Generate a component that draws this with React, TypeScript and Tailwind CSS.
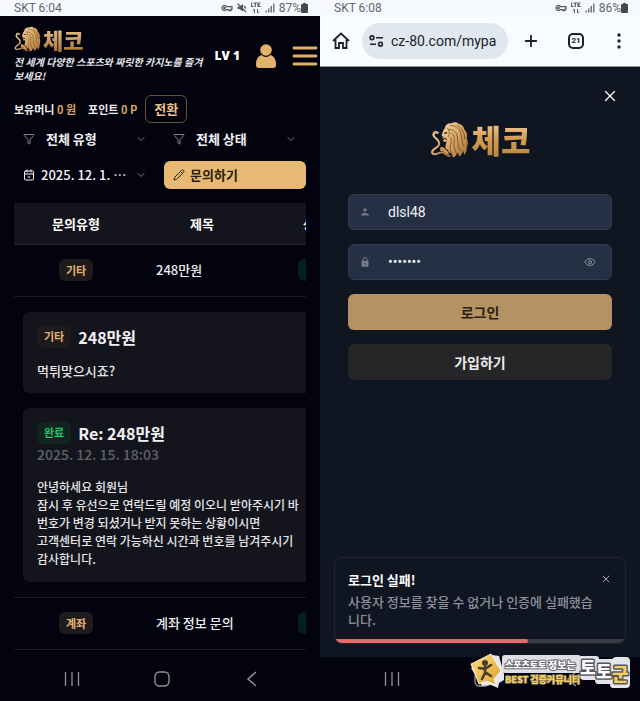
import { ReactNode } from 'react';
import { CalendarMinus2, ChevronDown, Eye, Filter, Pencil, Plus, X } from 'lucide-react';

type InquiryRow = {
  id: number;
  type: string;
  title: string;
};

const LION_LINES = [
  'M70 22 C84 20 98 30 102 44 C106 58 104 70 110 82',
  'M66 34 C80 32 90 42 92 56 C94 70 92 84 100 98',
  'M74 44 C82 50 84 60 82 72 C80 86 84 98 90 108',
  'M72 58 C76 68 72 78 70 88 C70 98 74 104 76 112',
  'M92 20 C106 30 114 44 114 62',
];

function Lion({ id, className }: { id: string; className: string }) {
  return (
    <svg className={className} viewBox="10 8 116 112" fill="none" aria-hidden="true">
      <defs>
        <linearGradient id={id} x1="0" y1="0" x2="1" y2="1">
          <stop offset="0" stopColor="#f6e0b0" />
          <stop offset="0.45" stopColor="#dca866" />
          <stop offset="1" stopColor="#a06c34" />
        </linearGradient>
      </defs>
      {/* tail and front leg */}
      <path
        d="M32 44 C22 38 16 48 22 56 C30 64 40 68 36 80 C33 90 14 92 15 104 C20 116 34 104 44 103 C54 102 56 112 68 114"
        stroke={`url(#${id})`}
        strokeWidth="6"
        strokeLinecap="round"
      />
      <path d="M20 46 C18 36 30 34 36 44 C30 42 26 44 24 48 Z" fill="#dca866" />
      <path d="M40 88 C48 84 52 90 58 96 C64 100 66 106 66 110 C56 108 52 98 40 98 Z" fill="#cf9752" />
      {/* head and mane */}
      <path
        fill={`url(#${id})`}
        d="M46 46 C48 40 50 34 54 30 C54 22 62 14 74 15 C82 9 92 12 96 16 C106 18 112 26 113 34 C121 42 123 52 120 60 C126 72 122 82 120 90 C121 98 118 106 112 110 C112 104 110 100 108 98 C108 106 102 114 96 116 C97 110 95 106 92 104 C90 112 84 118 77 118 C78 112 74 108 72 104 C68 106 64 102 64 96 C58 96 54 90 56 84 C56 78 60 74 58 70 C54 72 50 70 48 67 L53 63 L46 61 L48 55 L44 51 Z"
      />
      <path d="M50 44 L58 41 L62 44 L56 47 Z" fill="#20140a" />
      <path d="M47 60 L56 60 L60 66" stroke="#2c1a0b" strokeWidth="3" />
      <path d="M60 28 C68 34 70 44 64 56" stroke="#5a3818" strokeWidth="2" />
      {LION_LINES.map((d) => (
        <path key={d} d={d} stroke="#5b3a1c" strokeWidth="2" strokeLinecap="round" />
      ))}
    </svg>
  );
}

function SignalIcons({ muted }: { muted?: boolean }) {
  return (
    <span className="flex items-center gap-1 text-[#53575e]">
      <svg className="h-2 w-3" viewBox="0 0 24 14" fill="none" stroke="currentColor" strokeWidth="2.5" aria-hidden="true">
        <path d="M11 4a5 5 0 1 0 0 6h5v2h4v-3h2V4H11z" />
        <circle cx="7" cy="7" r="1.5" />
      </svg>
      {muted && (
        <svg className="h-2.5 w-2.5" viewBox="0 0 20 20" fill="currentColor" aria-hidden="true">
          <path d="M1 7h4l7-5v15l-7-5H1z" />
          <path d="M1 1l17 17M14 6l4 5" stroke="currentColor" strokeWidth="2.5" />
        </svg>
      )}
      <svg className="h-3 w-2.5" viewBox="0 0 20 24" fill="none" stroke="currentColor" strokeWidth="2.4" aria-hidden="true">
        <path d="M1 1v8h4M5 2h7M8.500 2v8M19 2h-5v7h5M14 5.500h4" />
        <path d="M7 22v-8l-3 3M13 14v8l3-3" strokeWidth="2" />
      </svg>
      <svg className="h-2.5 w-2.5" viewBox="0 0 20 20" fill="currentColor" aria-hidden="true">
        <path d="M1 15h3v4H1zM6 11h3v8H6zM11 6h3v13h-3zM16 1h3v18h-3z" opacity="0.8" />
      </svg>
    </span>
  );
}

function StatusBar({ time, battery, muted }: { time: string; battery: string; muted?: boolean }) {
  return (
    <div className="flex h-4 items-center justify-between bg-[#f6f9fe] pr-3 pl-[14px] font-[Roboto,sans-serif] text-xs text-[#63676e]">
      <span>SKT {time}</span>
      <span className="flex items-center gap-1">
        <SignalIcons muted={muted} />
        <span className="flex items-center">
          {battery}
          <svg className="h-[10px] w-[7px]" viewBox="0 0 14 20" fill="#46494f" aria-hidden="true">
            <path d="M4 0h6v2h2q2 0 2 2v14q0 2-2 2H2q-2 0-2-2V4q0-2 2-2h2z" />
          </svg>
        </span>
      </span>
    </div>
  );
}

function RecentsIcon() {
  return (
    <svg className="h-4 w-4" viewBox="0 0 16 16" stroke="#8f9196" strokeWidth="1.300" aria-hidden="true">
      <path d="M1.500 1v14M8 1v14M14.500 1v14" />
    </svg>
  );
}

function PhoneNav() {
  return (
    <nav className="flex h-11 items-center justify-between bg-[#03030f] pr-[60px] pl-16">
      <button aria-label="최근 앱"><RecentsIcon /></button>
      <button aria-label="홈">
        <svg className="h-4 w-4" viewBox="0 0 16 16" fill="none" stroke="#8f9196" strokeWidth="1.400" aria-hidden="true">
          <rect x="1" y="1" width="14" height="14" rx="4.500" />
        </svg>
      </button>
      <button aria-label="뒤로">
        <svg className="h-4 w-4" viewBox="0 0 16 16" fill="none" stroke="#8f9196" strokeWidth="1.500" aria-hidden="true">
          <path d="M12 1L4 8l8 7" />
        </svg>
      </button>
    </nav>
  );
}

function Badge({ tone, children }: { tone: 'gold' | 'green'; children: ReactNode }) {
  const colors = tone === 'gold' ? 'bg-[#1f1a1b] text-[#e3b273]' : 'bg-[#10251f] text-[#1fc768]';
  return (
    <span className={`inline-flex h-[22px] items-center rounded-md px-[7px] text-[11px] font-bold ${colors}`}>
      {children}
    </span>
  );
}

function FilterButton({ icon, label, date }: { icon: ReactNode; label: string; date?: boolean }) {
  return (
    <button className="flex h-7 items-center px-[9px] text-[13px] font-bold text-[#f2f2f4]">
      {icon}
      <span className={`flex-1 text-left whitespace-nowrap ${date ? 'pl-[6px] font-medium' : 'pl-[11px]'}`}>
        {label}
      </span>
      <ChevronDown className="size-3 shrink-0 text-[#77777f]" strokeWidth={2} />
    </button>
  );
}

function ListRow({ row }: { row: InquiryRow }) {
  return (
    <tr className="h-[52px] border-b border-[#1b1b23]">
      <td className="text-center"><Badge tone="gold">{row.type}</Badge></td>
      <td className="pl-[18px] font-medium text-[#ececef]">{row.title}</td>
      <td className="text-center">
        <span className="inline-block h-[22px] w-[34px] rounded-md bg-[#04201e] align-middle" />
      </td>
    </tr>
  );
}

function InquiryScreen() {
  return (
    <section className="flex flex-col overflow-hidden bg-[#03030f]">
      <StatusBar time="6:04" battery="87%" muted />
      <header className="flex items-center justify-between pt-[9px] pr-[2px] pl-[14px]">
        <div>
          <a href="#home" className="flex items-center gap-[2px]">
            <Lion id="lion-small" className="h-[26px] w-[27px]" />
            <span className="bg-linear-to-b from-[#efcf95] to-[#a8702f] bg-clip-text text-[22px] leading-7 font-black text-transparent">체코</span>
          </a>
          <p className="w-[190px] pt-[2px] text-[10px] leading-[14px] font-bold text-[#e4e4e8] italic">
            전 세계 다양한 스포츠와 짜릿한 카지노를 즐겨 보세요!
          </p>
        </div>
        <div className="flex items-center pt-1">
          <span className="font-['Open_Sans',sans-serif] text-xs font-extrabold text-white">LV 1</span>
          <button aria-label="내 정보" className="pl-4">
            <svg className="h-6 w-5" viewBox="0 0 20 24" fill="#e2b26c" aria-hidden="true">
              <circle cx="10" cy="6" r="5.800" />
              <path d="M5.500 11q4.500 4 9 0q5.500 2 5.500 9v1q0 3-3 3H3q-3 0-3-3v-1q0-7 5.500-9z" />
            </svg>
          </button>
          <button aria-label="메뉴" className="pl-4">
            <svg className="h-5 w-[26px]" viewBox="0 0 26 20" stroke="#dfb06b" strokeWidth="2.800" strokeLinecap="round" aria-hidden="true">
              <path d="M2 2h22M2 10h22M2 18h22" />
            </svg>
          </button>
        </div>
      </header>

      <div className="flex items-center pt-3 pl-[14px] text-[11px] font-bold text-[#ededf0]">
        <span>보유머니 <span className="text-[#d9a762]">0 원</span></span>
        <span className="pl-3">포인트 <span className="text-[#d9a762]">0 P</span></span>
        <button className="ml-2 h-7 rounded-md border border-[#65503c] px-2 text-[13px] text-[#eac185]">전환</button>
      </div>

      <div className="grid grid-cols-2 gap-2 px-[14px] pt-[2px]">
        <FilterButton icon={<Filter className="size-3 shrink-0 text-[#85858c]" />} label="전체 유형" />
        <FilterButton icon={<Filter className="size-3 shrink-0 text-[#85858c]" />} label="전체 상태" />
        <FilterButton icon={<CalendarMinus2 className="size-3 shrink-0" />} label="2025. 12. 1. …" date />
        <button className="flex h-7 items-center gap-[5px] rounded-md bg-[#e8b973] px-[9px] text-[13px] font-bold text-[#2a1c0c]">
          <Pencil className="size-3" />
          문의하기
        </button>
      </div>

      <div className="mx-[14px] mt-[14px] overflow-hidden">
        <table className="w-[460px] table-fixed border-collapse text-[13px]">
          <thead>
            <tr className="h-[41px] border-b border-[#24242a] bg-[#14151c] font-bold text-white">
              <th className="w-[124px]">문의유형</th>
              <th className="w-[128px]">제목</th>
              <th className="w-[98px]">상태</th>
              <th />
            </tr>
          </thead>
          <tbody>
            <ListRow row={{ id: 2, type: '기타', title: '248만원' }} />
            <tr className="border-b border-[#1b1b23]">
              <td colSpan={4} className="px-[9px] py-[15px]">
                <article className="rounded-md bg-[#14151c] px-[14px] pt-[14px] pb-[13px]">
                  <div className="flex items-center gap-[7px]">
                    <Badge tone="gold">기타</Badge>
                    <h2 className="text-base leading-[22px] font-bold text-[#f1f1f4]">248만원</h2>
                  </div>
                  <p className="pt-[14px] leading-[18px] font-medium text-[#e6e6ea]">먹튀맞으시죠?</p>
                </article>
                <article className="mt-[15px] rounded-md bg-[#14151c] p-[14px]">
                  <div className="flex items-center gap-[7px]">
                    <Badge tone="green">완료</Badge>
                    <h2 className="text-base leading-[22px] font-bold text-[#f1f1f4]">Re: 248만원</h2>
                  </div>
                  <time className="block text-sm leading-5 font-medium text-[#5f616d]">2025. 12. 15. 18:03</time>
                  <p className="pt-[14px] text-xs leading-[18px] font-medium whitespace-nowrap text-[#e6e6ea]">
                    안녕하세요 회원님<br />
                    잠시 후 유선으로 연락드릴 예정 이오니 받아주시기 바<br />
                    번호가 변경 되셨거나 받지 못하는 상황이시면<br />
                    고객센터로 연락 가능하신 시간과 번호를 남겨주시기<br />
                    감사합니다.
                  </p>
                </article>
              </td>
            </tr>
            <ListRow row={{ id: 1, type: '계좌', title: '계좌 정보 문의' }} />
          </tbody>
        </table>
      </div>
      <div className="mt-auto"><PhoneNav /></div>
    </section>
  );
}

function BrowserBar() {
  return (
    <div className="flex h-[51px] items-center border-b border-[#8c9199] bg-[#f8fbff] pr-4 pl-3 text-[#202226]">
      <button aria-label="홈">
        <svg className="size-[18px]" viewBox="0 0 18 18" fill="none" stroke="currentColor" strokeWidth="1.800" aria-hidden="true">
          <path d="M1 9L9 1.500L17 9M3.500 7.500V16H7v-5h4v5h3.500V7.500" />
        </svg>
      </button>
      <label className="ml-3 flex h-9 min-w-0 flex-1 items-center gap-[7px] rounded-full bg-[#e1e7ef] px-[7px]">
        <svg className="h-3 w-[15px] shrink-0" viewBox="0 0 15 12" fill="none" stroke="currentColor" strokeWidth="1.600" aria-hidden="true">
          <circle cx="3" cy="2.800" r="1.900" />
          <path d="M7 2.800h7M1 9.200h6" />
          <circle cx="11.500" cy="9.200" r="1.900" />
        </svg>
        <input
          aria-label="주소"
          className="w-full min-w-0 bg-transparent font-[Roboto,sans-serif] text-sm outline-none"
          defaultValue="cz-80.com/mypa"
        />
      </label>
      <button aria-label="새 탭" className="ml-[14px]"><Plus className="size-[18px]" strokeWidth={2.4} /></button>
      <button className="ml-7 flex size-4 items-center justify-center rounded-[5px] border-2 border-[#202226] font-[Roboto,sans-serif] text-[8px] font-bold">21</button>
      <button aria-label="더보기" className="ml-[30px]">
        <svg className="h-4 w-[10px]" viewBox="0 0 10 16" fill="currentColor" aria-hidden="true">
          <circle cx="5" cy="2" r="1.700" />
          <circle cx="5" cy="8" r="1.700" />
          <circle cx="5" cy="14" r="1.700" />
        </svg>
      </button>
    </div>
  );
}

function LoginScreen() {
  return (
    <section className="flex flex-col bg-[#0f1521]">
      <StatusBar time="6:08" battery="86%" />
      <BrowserBar />
      <div className="flex justify-end pt-5 pr-[21px]">
        <button aria-label="닫기" className="text-white"><X className="size-[18px]" strokeWidth={1.7} /></button>
      </div>
      <div className="flex items-center justify-center gap-[3px] pt-[14px]">
        <Lion id="lion-large" className="h-[37px] w-[39px]" />
        <span className="bg-linear-to-b from-[#f4d79f] via-[#d59c50] to-[#b9843e] bg-clip-text text-[32px] leading-[40px] font-black text-transparent">체코</span>
      </div>

      <form className="flex flex-col gap-[14px] px-7 pt-[35px]" onSubmit={(e) => e.preventDefault()}>
        <label className="flex h-9 items-center rounded-md border border-[#343c4f] bg-[#263044] px-[11px]">
          <svg className="size-[10px] shrink-0" viewBox="0 0 10 10" fill="#747b89" aria-hidden="true">
            <circle cx="5" cy="3" r="1.700" />
            <path d="M1 8.500q0-2.500 4-2.500t4 2.500z" />
          </svg>
          <input
            aria-label="아이디"
            className="min-w-0 flex-1 bg-transparent pl-[18px] font-[Roboto,sans-serif] text-sm text-[#eef0f4] outline-none"
            defaultValue="dlsl48"
          />
        </label>
        <label className="flex h-9 items-center rounded-md border border-[#343c4f] bg-[#263044] px-[11px]">
          <svg className="size-[10px] shrink-0" viewBox="0 0 10 10" fill="none" aria-hidden="true">
            <rect x="1.500" y="3.800" width="7" height="6" rx="0.800" fill="#747b89" />
            <path d="M3 4V2.500a2 2 0 0 1 4 0V4" stroke="#747b89" />
            <circle cx="5" cy="6.700" r="0.800" fill="#3b4457" />
          </svg>
          <input
            type="password"
            aria-label="비밀번호"
            className="min-w-0 flex-1 bg-transparent pl-[18px] font-[Roboto,sans-serif] text-sm text-[#eef0f4] outline-none"
            defaultValue="1234567"
          />
          <button type="button" aria-label="비밀번호 보기" className="pr-1 text-[#8a909d]"><Eye className="size-3" /></button>
        </label>
        <button className="h-9 rounded-md bg-[#b39362] text-sm font-bold text-[#2a2015]">로그인</button>
        <button type="button" className="h-9 rounded-md bg-[#262628] text-sm font-bold text-[#ececee]">가입하기</button>
      </form>

      <div role="alert" className="mx-[14px] mt-auto mb-[13px] overflow-hidden rounded-lg border border-[#202531]">
        <div className="flex items-start justify-between px-[13px] pt-[13px] pb-[10px] text-[13px]">
          <div className="w-[248px]">
            <p className="leading-[18px] font-bold text-white">로그인 실패!</p>
            <p className="pt-1 leading-[18px] font-medium text-[#8e919b]">사용자 정보를 찾을 수 없거나 인증에 실패했습니다.</p>
          </div>
          <button aria-label="알림 닫기" className="pt-[2px] text-[#a5a7ae]"><X className="size-3" /></button>
        </div>
        <div className="h-1 bg-[#393943]">
          <div className="h-full w-2/3 rounded-r-full bg-[#e8686b]" />
        </div>
      </div>
      <PhoneNav />
    </section>
  );
}

function CommunityMark() {
  return (
    <svg className="absolute right-2 bottom-2 h-10 w-[162px]" viewBox="0 0 162 40" role="img" aria-label="토토군">
      <defs>
        <linearGradient id="sign" x1="0" y1="0" x2="1" y2="1">
          <stop offset="0" stopColor="#ffe07a" />
          <stop offset="1" stopColor="#dca02e" />
        </linearGradient>
      </defs>
      <path d="M1 15L22 2l7 1 5 18 0 6-5 3-1 5-7-3-9 1z" fill="#e6e7ea" />
      <path d="M1 11L21 1L31 18L24 26L26 32L17 28L9 31Z" fill="url(#sign)" stroke="#f4f1e8" />
      <circle cx="15" cy="10" r="3" fill="#4b3d29" />
      <path d="M9 15l6 1 6-4M15 14v6l-3 6M15 19l6 4" fill="none" stroke="#4b3d29" strokeWidth="2.600" strokeLinecap="round" />
      <path d="M35 2h73q3 0 3 3v13q0 2-3 2H35q-3 0-3-3V5q0-3 3-3z" fill="#dddee2" />
      <path d="M111 3h15q3 0 3 3h13q2-2 4-2h10q4 0 4 4v23q0 4-4 4h-13q-3 0-3-4h-12q-3 0-3-4h-11q-4 0-4-4V6q0-3 1-3z" fill="#e4e5e8" />
      <g fontFamily="Noto Sans CJK KR, sans-serif" fontWeight="900" paintOrder="stroke" strokeLinejoin="round">
        <text x="35" y="15" fontSize="9" fill="#fff" stroke="#62656e" strokeWidth="2">스포츠토토</text>
        <text x="78" y="16" fontSize="10" fill="#fff" stroke="#62656e" strokeWidth="2">정보는</text>
        <text x="35" y="30" fontSize="9" fill="#f8d04f" stroke="#77736a" strokeWidth="1.500">BEST 검증커뮤니티</text>
        <text x="110" y="21" fontSize="17" fill="#fff" stroke="#555861" strokeWidth="3">토</text>
        <text x="126" y="25" fontSize="17" fill="#fff" stroke="#555861" strokeWidth="3">토</text>
        <text x="142" y="28" fontSize="18" fill="#f5cd5f" stroke="#555861" strokeWidth="3">군</text>
      </g>
    </svg>
  );
}

export default function App() {
  return (
    <main className="relative grid min-h-screen grid-cols-2 font-['Noto_Sans_CJK_KR',sans-serif]">
      <InquiryScreen />
      <LoginScreen />
      <CommunityMark />
    </main>
  );
}
